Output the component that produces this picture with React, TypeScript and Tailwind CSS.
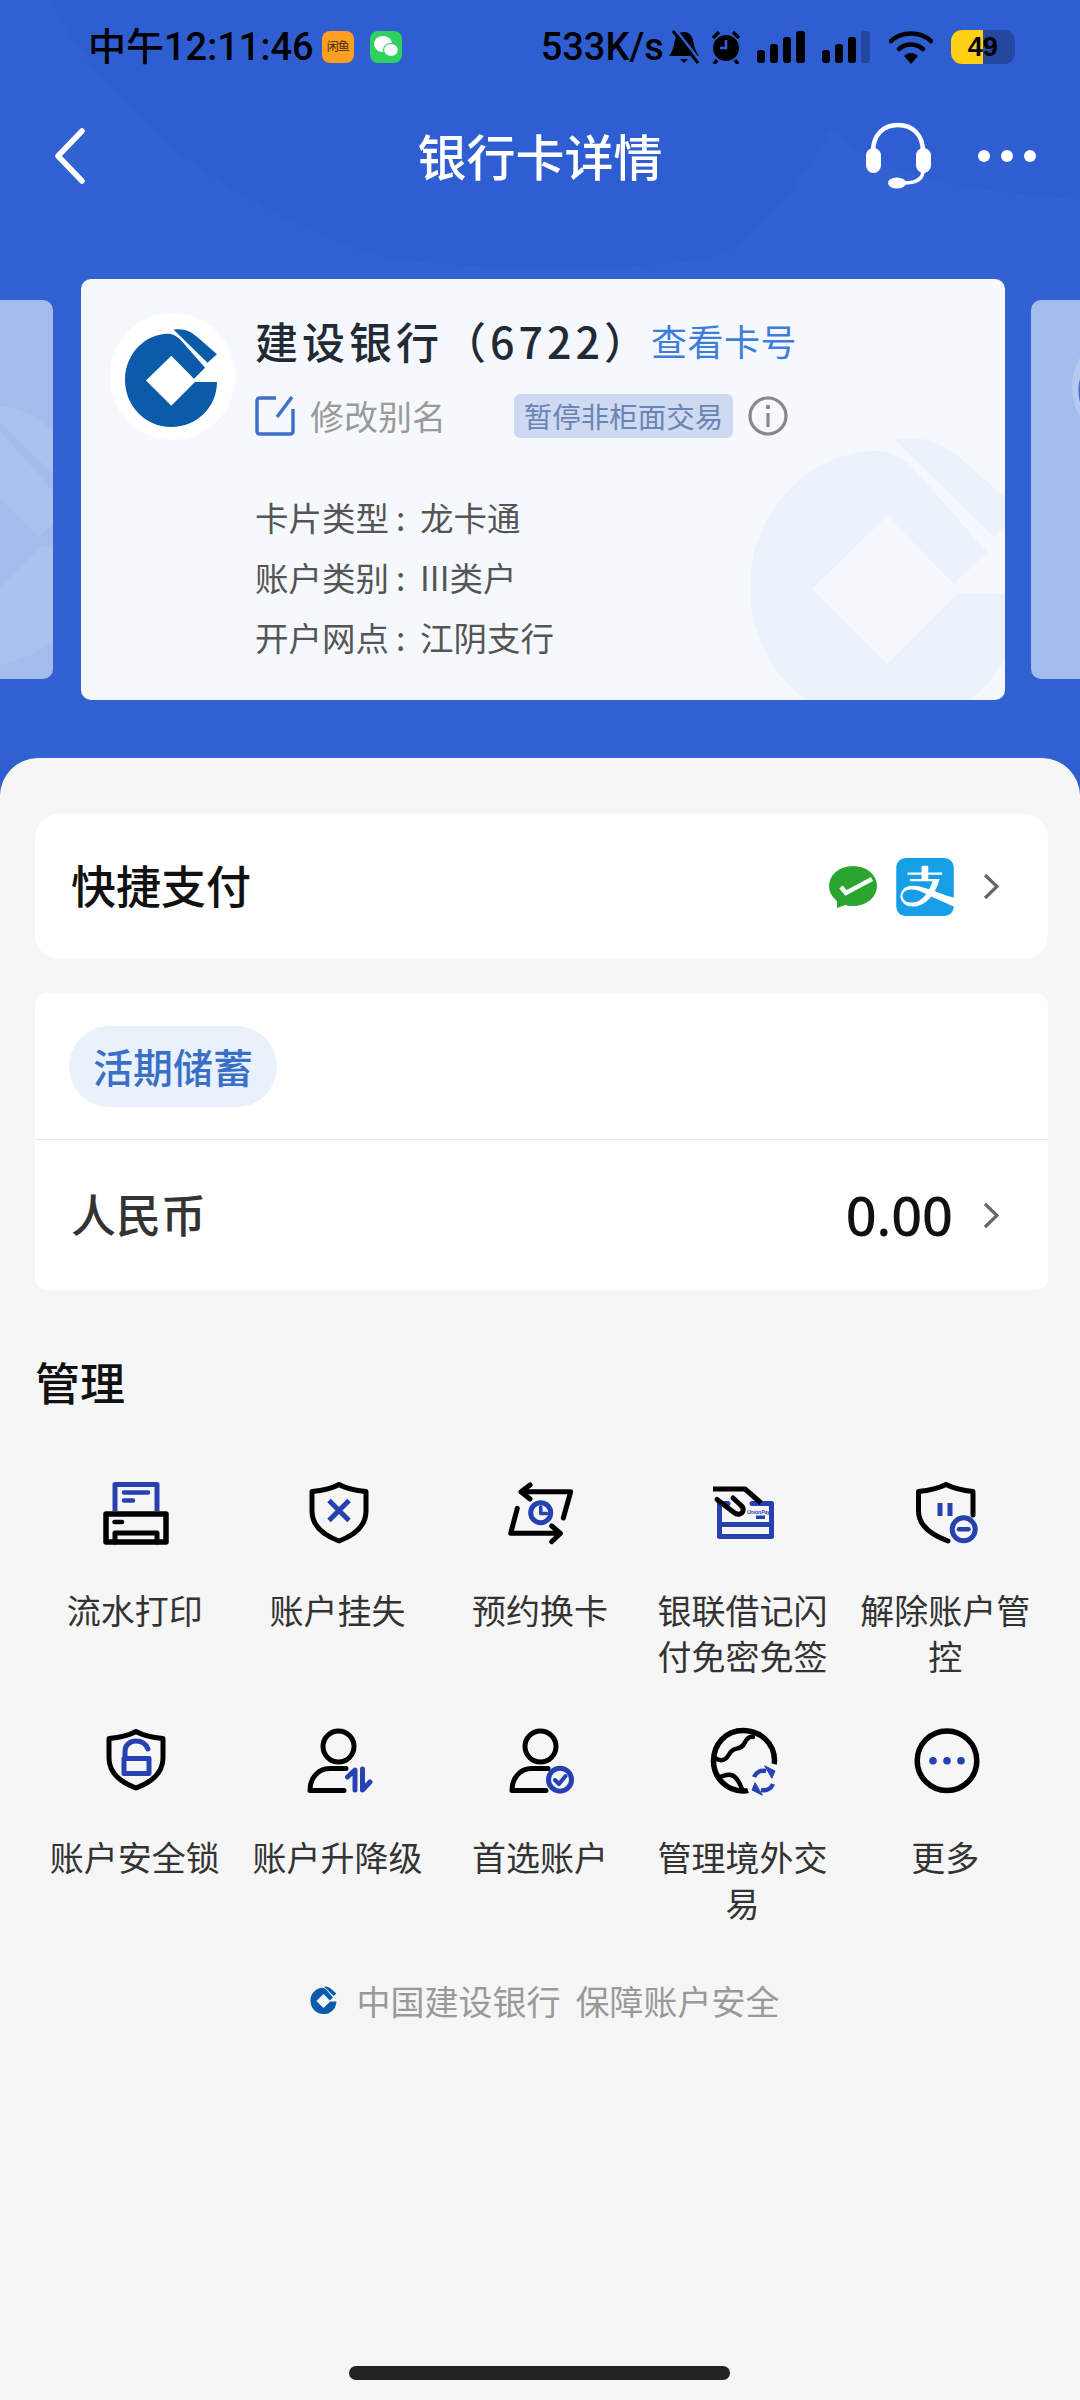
import { SiAlipay } from "react-icons/si"

const BLUE = "#2541b2"

function CcbLogo({ size, color = "#0b5ca8" }: { size: number; color?: string }) {
  return (
    <svg width={size} height={size} viewBox="0 0 420 420" fill={color} className="shrink-0">
      <path d="M340 225C340 300 280 358 205 358C128 358 68 295 68 218C68 140 130 82 195 82C210 82 222 90 232 100L305 183L272 215L205 147L130 220L205 295L275 225Z" />
      <path d="M212 70C240 65 265 75 285 95L340 143L312 168Z" />
    </svg>
  )
}

function Shield({ open }: { open?: boolean }) {
  return open ? (
    <path d="M66 41V17.5C55 16.5 47 14.5 39 10.5C31 14.5 22 16.5 11.5 17.5V37C11.5 51 22 60 41 67" stroke="#000" strokeWidth="5" fill="none" />
  ) : (
    <path d="M40 10.5C47 14.5 56 16.5 67 17.5V37C67 51 56 61 40 67C24 61 13 51 13 37V17.5C24 16.5 33 14.5 40 10.5Z" stroke="#000" strokeWidth="5" fill="none" />
  )
}

function Person({ bodyEnd }: { bodyEnd: number }) {
  return (
    <g stroke="#000" strokeWidth="5" fill="none">
      <circle cx="39.5" cy="25.5" r="15.5" />
      <path d={`M47 47.5H31C19 47.5 11 57 11 69.5H${bodyEnd}`} />
    </g>
  )
}

function Icon({ children }: { children: React.ReactNode }) {
  return (
    <svg width="80" height="80" viewBox="0 0 80 80" fill="none" strokeLinecap="round" strokeLinejoin="round">
      {children}
    </svg>
  )
}

const items = [
  {
    label: "流水打印",
    icon: (
      <Icon>
        <path d="M19 37V10.5H61V37" stroke={BLUE} strokeWidth="5" strokeLinecap="butt" />
        <path d="M28 18.5H52M28 26.5H37" stroke={BLUE} strokeWidth="4.5" />
        <rect x="10" y="40" width="60" height="28" stroke="#000" strokeWidth="5.5" />
        <path d="M18.5 48H26" stroke="#000" strokeWidth="4.5" />
        <path d="M19 68V59H61V68" stroke="#000" strokeWidth="5" />
      </Icon>
    ),
  },
  {
    label: "账户挂失",
    icon: (
      <Icon>
        <Shield />
        <path d="M30 26.5L50 46.5M50 26.5L30 46.5" stroke={BLUE} strokeWidth="5" strokeLinecap="butt" />
      </Icon>
    ),
  },
  {
    label: "预约换卡",
    icon: (
      <Icon>
        <path d="M29 11L20 17.7L29 25M20 17.7H69.7L62.3 44M16.3 34.3L9.7 59.3H59M50.7 52L59.5 59.3L50.7 67.7" stroke="#000" strokeWidth="5" />
        <circle cx="39.7" cy="38.7" r="10" stroke={BLUE} strokeWidth="5" />
        <path d="M39.7 33V39.5H45.5" stroke={BLUE} strokeWidth="3.5" />
      </Icon>
    ),
  },
  {
    label: "银联借记闪付免密免签",
    icon: (
      <Icon>
        <path d="M48 29.5H67.5V62.5H15.5V29.5H24" stroke={BLUE} strokeWidth="5" />
        <path d="M16 50.5H67" stroke={BLUE} strokeWidth="5" strokeLinecap="butt" />
        <text x="43" y="40" fontSize="5" fontStyle="italic" fontWeight="700" fill={BLUE} fontFamily="Liberation Sans, sans-serif">
          UnionPay
        </text>
        <rect x="52" y="41.5" width="9" height="3.5" fill={BLUE} />
        <path d="M9 15H41L57 29" stroke="#000" strokeWidth="5" strokeLinecap="butt" />
        <path d="M13 25.5L30 38.5C34 41.5 38 40 39 37C40 34 38 32 36 30.5L29 24" stroke="#000" strokeWidth="5" />
      </Icon>
    ),
  },
  {
    label: "解除账户管控",
    icon: (
      <Icon>
        <Shield open />
        <path d="M33 29V42M43 29V42" stroke={BLUE} strokeWidth="5" strokeLinecap="butt" />
        <circle cx="56.7" cy="55.3" r="11.5" stroke={BLUE} strokeWidth="5" />
        <path d="M52 55.3H61.5" stroke={BLUE} strokeWidth="4.5" />
      </Icon>
    ),
  },
  {
    label: "账户安全锁",
    icon: (
      <Icon>
        <Shield />
        <rect x="28" y="37.5" width="25" height="15" stroke={BLUE} strokeWidth="5" />
        <path d="M29 36V30C29 24 34 20 40 20C46 20 50 23 52 28" stroke={BLUE} strokeWidth="5" />
      </Icon>
    ),
  },
  {
    label: "账户升降级",
    icon: (
      <Icon>
        <Person bodyEnd={45} />
        <path d="M56 69V49L48.5 56M63.5 48V69L71 61" stroke={BLUE} strokeWidth="5" />
      </Icon>
    ),
  },
  {
    label: "首选账户",
    icon: (
      <Icon>
        <Person bodyEnd={45} />
        <circle cx="59" cy="58.7" r="11.5" stroke={BLUE} strokeWidth="5" />
        <path d="M54 59L58 63L64.5 55" stroke={BLUE} strokeWidth="4" />
      </Icon>
    ),
  },
  {
    label: "管理境外交易",
    icon: (
      <Icon>
        <path d="M70 43C70.5 41.5 70.5 41 70.5 39.5C70.5 22.5 56.5 9.5 39 9.5C22 9.5 9.5 23 9.5 40C9.5 57 23 70 39 70C41 70 42.5 70 44 69.5" stroke="#000" strokeWidth="5.5" strokeLinecap="butt" />
        <path d="M49 16C45 15 42 19 40 23C37 28 33 27 29 29C25 31 25 36 21 38C18 40 14 39 11 37" stroke="#000" strokeWidth="4.5" />
        <path d="M15 56C20 55 23 53 27 54C32 55 35 60 38 68" stroke="#000" strokeWidth="4.5" />
        <path d="M50 56C52 51 57 49 62 50M69 63C67 68 62 70 57 69" stroke={BLUE} strokeWidth="4.5" strokeLinecap="butt" />
        <path d="M61 45L71 50L68 57ZM58 74L48 69L51 62Z" fill={BLUE} stroke={BLUE} strokeWidth="1" />
      </Icon>
    ),
  },
  {
    label: "更多",
    icon: (
      <Icon>
        <circle cx="40" cy="39.7" r="29.8" stroke="#000" strokeWidth="5.5" />
        <circle cx="26" cy="39.7" r="3.8" fill={BLUE} />
        <circle cx="40" cy="39.7" r="3.8" fill={BLUE} />
        <circle cx="54" cy="39.7" r="3.8" fill={BLUE} />
      </Icon>
    ),
  },
]

const cardInfo = [
  { label: "卡片类型", value: "龙卡通" },
  { label: "账户类别", value: "III类户" },
  { label: "开户网点", value: "江阴支行" },
]

function Chevron() {
  return (
    <svg width="16" height="27" viewBox="0 0 16 27" fill="none">
      <path d="M2 2L14 13.5L2 25" stroke="#666" strokeWidth="3.2" />
    </svg>
  )
}

function StatusBar() {
  return (
    <div className="flex h-[94px] items-center pl-[88px] font-['Roboto','Noto_Sans_CJK_SC',sans-serif] text-[38px] font-medium text-black">
      <span>中午12:11:46</span>
      <div className="ml-[8px] flex h-[32px] w-[32px] items-center justify-center rounded-[8px] bg-[#ff9f1f] text-[12px] leading-none tracking-[-1px] text-[#5b3a10]">
        闲鱼
      </div>
      <div className="ml-[16px] flex h-[32px] w-[32px] items-center justify-center rounded-[8px] bg-[#2fd15f]">
        <svg width="26" height="24" viewBox="0 0 26 24" fill="#fff">
          <ellipse cx="10" cy="9" rx="9" ry="8" />
          <ellipse cx="18" cy="15" rx="7.5" ry="6.5" stroke="#2fd15f" strokeWidth="1.2" />
        </svg>
      </div>
      <span className="ml-[139px]">533K/s</span>
      <svg width="36" height="36" viewBox="0 0 36 36" className="ml-[2px]">
        <path d="M18 3C11 3 9 9 8 16C7 21 5 24 3 27H33C31 24 29 21 28 16C27 9 25 3 18 3Z" fill="#000" />
        <path d="M14 30H22L18 34Z" fill="#000" />
        <path d="M7 2L32 34" stroke="#000" strokeWidth="3" />
        <path d="M10 1L35 33" stroke="#2f60d3" strokeWidth="2.5" />
      </svg>
      <svg width="30" height="34" viewBox="0 0 30 34" className="ml-[9px]">
        <circle cx="15" cy="18" r="13" fill="#000" />
        <path d="M15 10V18H9" stroke="#2f60d3" strokeWidth="2.5" fill="none" />
        <path d="M2 8L8 2M28 8L22 2M6 30L3 34M24 30L27 34" stroke="#000" strokeWidth="3.5" />
      </svg>
      <svg width="50" height="32" viewBox="0 0 50 32" className="ml-[15px]" fill="#000">
        <rect x="1" y="19" width="8" height="13" rx="3" />
        <rect x="14" y="13" width="8" height="19" rx="3" />
        <rect x="27" y="6" width="8" height="26" rx="3" />
        <rect x="40" y="0" width="9" height="32" rx="3" />
      </svg>
      <svg width="50" height="32" viewBox="0 0 50 32" className="ml-[15px]" fill="#000">
        <rect x="1" y="19" width="8" height="13" rx="3" />
        <rect x="14" y="13" width="8" height="19" rx="3" />
        <rect x="27" y="6" width="8" height="26" rx="3" />
        <rect x="40" y="0" width="9" height="32" rx="3" fill="#24479f" />
      </svg>
      <svg width="44" height="34" viewBox="0 0 44 34" className="ml-[18px]" fill="none">
        <path d="M2 11C13 1 31 1 42 11" stroke="#000" strokeWidth="4.5" strokeLinecap="round" />
        <path d="M10 19C17 13 27 13 34 19" stroke="#000" strokeWidth="4.5" strokeLinecap="round" />
        <path d="M15 26C19 22 25 22 29 26L22 34Z" fill="#000" />
      </svg>
      <div className="relative ml-[18px] flex h-[34px] w-[64px] overflow-hidden rounded-[11px] bg-[#24479f] font-['Liberation_Sans',sans-serif] text-[27px] font-bold">
        <div className="w-[32px] bg-[#ffd014]" />
        <span className="absolute inset-0 flex items-center justify-center leading-none">49</span>
      </div>
    </div>
  )
}

function NavBar() {
  return (
    <div className="grid h-[124px] grid-cols-[1fr_auto_1fr] items-center text-white">
      <div className="pl-[52px]">
        <svg width="34" height="56" viewBox="0 0 34 56" fill="none">
          <path d="M30 3L6 28L30 53" stroke="#fff" strokeWidth="5.5" strokeLinecap="round" strokeLinejoin="round" />
        </svg>
      </div>
      <div className="pb-[4px] text-[49px] leading-none font-medium">银行卡详情</div>
      <div className="flex items-center justify-end gap-[40px] pr-[44px]">
        <svg width="80" height="80" viewBox="0 0 80 80" fill="none">
          <path d="M15 36C15 18 26 9 40 9C54 9 65 18 65 36" stroke="#fff" strokeWidth="4.5" />
          <rect x="8" y="32" width="15" height="25" rx="7.5" fill="#fff" />
          <rect x="58" y="32" width="15" height="25" rx="7.5" fill="#fff" />
          <path d="M65 56C64 64 56 67 46 67" stroke="#fff" strokeWidth="3.5" />
          <ellipse cx="39" cy="67" rx="9" ry="5.5" fill="#fff" />
        </svg>
        <svg width="58" height="14" viewBox="0 0 58 14" fill="#fff">
          <circle cx="6" cy="7" r="6" />
          <circle cx="29" cy="7" r="6" />
          <circle cx="52" cy="7" r="6" />
        </svg>
      </div>
    </div>
  )
}

function CardCarousel() {
  return (
    <div className="flex h-[421px] items-center">
      <div className="relative h-[379px] w-[53px] overflow-hidden rounded-r-[10px] bg-[#a4bcec]">
        <div className="absolute left-[-206px] top-[44px] opacity-[0.07]">
          <CcbLogo size={378} color="#ffffff" />
        </div>
      </div>

      <div className="relative ml-[28px] h-[421px] w-[924px] overflow-hidden rounded-[10px] bg-[#f5f9fe]">
        {/* watermark */}
        <div className="absolute left-[601px] top-[90px]">
          <CcbLogo size={420} color="#ebf2fc" />
        </div>

        <div className="relative">
          <div className="absolute left-[29px] top-[34px] flex h-[127px] w-[125px] items-center justify-center rounded-full bg-white">
            <CcbLogo size={142} />
          </div>
          <div className="pl-[174px] pt-[31px]">
            <div className="flex h-[60px] items-center">
              <span className="text-[43px] leading-none font-medium tracking-[4px] text-[#222a35]">建设银行（6722）</span>
              <span className="text-[36px] leading-none tracking-[0.5px] text-[#3f7ddb]">查看卡号</span>
            </div>
            <div className="mt-[24px] flex h-[44px] items-center">
              <svg width="40" height="42" viewBox="0 0 40 42" fill="none">
                <path d="M21 3H5C3 3 2 4 2 6V36C2 38 3 39 5 39H35C37 39 38 38 38 36V14" stroke="#3f6fc8" strokeWidth="3.5" />
                <path d="M37 2L22 22" stroke="#3f6fc8" strokeWidth="3.5" />
              </svg>
              <span className="ml-[15px] text-[34px] leading-none text-[#9a9a9a]">修改别名</span>
              <span className="ml-[68px] flex h-[44px] w-[219px] items-center justify-center rounded-[6px] bg-[#cddaf2] text-[28.5px] leading-none whitespace-nowrap text-[#6b84b3]">
                暂停非柜面交易
              </span>
              <svg width="40" height="40" viewBox="0 0 40 40" fill="none" className="ml-[15px]">
                <circle cx="20" cy="20" r="18" stroke="#888" strokeWidth="3.2" />
                <path d="M20 17V31" stroke="#888" strokeWidth="3.2" />
                <circle cx="20" cy="11" r="2.2" fill="#888" />
              </svg>
            </div>
            <div className="mt-[56px] flex flex-col gap-[14px] text-[33.5px] leading-[46px] text-[#555]">
              {cardInfo.map((row) => (
                <div key={row.label} className="flex">
                  <span className="w-[165px]">
                    {row.label}
                    <span className="ml-[7px]">:</span>
                  </span>
                  <span>{row.value}</span>
                </div>
              ))}
            </div>
          </div>
        </div>
      </div>

      <div className="relative ml-[26px] h-[379px] w-[49px] overflow-hidden rounded-l-[10px] bg-[#a4bcec]">
        <div className="absolute left-[41px] top-[30px] h-[114px] w-[114px] rounded-full bg-[#b6c9f0]" />
        <div className="absolute left-[27px] top-[25px]">
          <CcbLogo size={126} color="#4a76c8" />
        </div>
      </div>
    </div>
  )
}

export default function App() {
  return (
    <div className="relative flex h-[2400px] w-[1080px] flex-col overflow-hidden bg-[#2e5ed1] font-['Noto_Sans_CJK_SC','Noto_Sans',sans-serif]">
      {/* header background curves */}
      <svg width="1080" height="760" viewBox="0 0 1080 760" className="absolute left-0 top-0" fill="none">
        <path d="M50 0C120 130 230 200 360 250C420 274 700 274 730 250C780 210 810 170 830 130C900 190 1000 190 1080 200V760H0V0Z" fill="#fff" fillOpacity="0.02" />
      </svg>

      <div className="relative">
        <StatusBar />
        <NavBar />
        <div className="mt-[61px]">
          <CardCarousel />
        </div>
      </div>

      <div className="relative mt-[58px] flex flex-1 flex-col rounded-t-[38px] bg-[#f6f6f6] pl-[35px] pr-[32px] pt-[56px]">
        <div className="flex h-[145px] items-center rounded-[24px] bg-white pl-[36px] pr-[49px]">
          <span className="pb-[4px] text-[45px] font-medium text-[#111]">快捷支付</span>
          <svg width="48" height="42" viewBox="0 0 48 42" className="ml-auto">
            <ellipse cx="24" cy="20" rx="24" ry="20" fill="#2aa52f" />
            <path d="M8 33L8 42L19 38Z" fill="#2aa52f" />
            <path d="M12 21L17 27L43 13" stroke="#fff" strokeWidth="4.5" fill="none" />
          </svg>
          <div className="ml-[19px] flex h-[58px] w-[58px] items-center justify-center overflow-hidden rounded-[9px] bg-white">
            <SiAlipay size={58} color="#169fe6" />
          </div>
          <div className="ml-[29px]">
            <Chevron />
          </div>
        </div>

        <div className="mt-[34px] overflow-hidden rounded-[12px] bg-white">
          <div className="flex h-[147px] items-center border-b border-[#e6e6e6] pl-[34px]">
            <span className="flex h-[81px] w-[208px] items-center justify-center rounded-full bg-[#e9f1fb] text-[40px] font-medium text-[#3a6fc7]">
              活期储蓄
            </span>
          </div>
          <div className="flex h-[150px] items-center pl-[36px] pr-[29px]">
            <span className="pb-[2px] text-[45px] font-medium text-[#333]">人民币</span>
            <span className="ml-auto font-['Noto_Sans',sans-serif] text-[54px] font-medium text-[#111]">0.00</span>
            <div className="ml-[30px] mr-[20px]">
              <Chevron />
            </div>
          </div>
        </div>

        <div className="mt-[62px] h-[60px] text-[45px] leading-[60px] font-medium text-[#111]">管理</div>

        <div className="mt-[62px] grid grid-cols-5 gap-y-[42px]">
          {items.map((item) => (
            <div key={item.label} className="flex flex-col items-center">
              {item.icon}
              <div className="mt-[33px] pl-[1px] pr-[4px] text-center text-[34px] leading-[46px] text-[#333]">{item.label}</div>
            </div>
          ))}
        </div>

        <div className="mt-[51px] flex h-[46px] items-center justify-center text-[34px] text-[#999]">
          <CcbLogo size={40} />
          <span className="ml-[13px]">中国建设银行</span>
          <span className="ml-[15px]">保障账户安全</span>
        </div>

        <div className="mb-[20px] ml-[314px] mt-auto h-[14px] w-[381px] rounded-full bg-[#222]" />
      </div>
    </div>
  )
}
